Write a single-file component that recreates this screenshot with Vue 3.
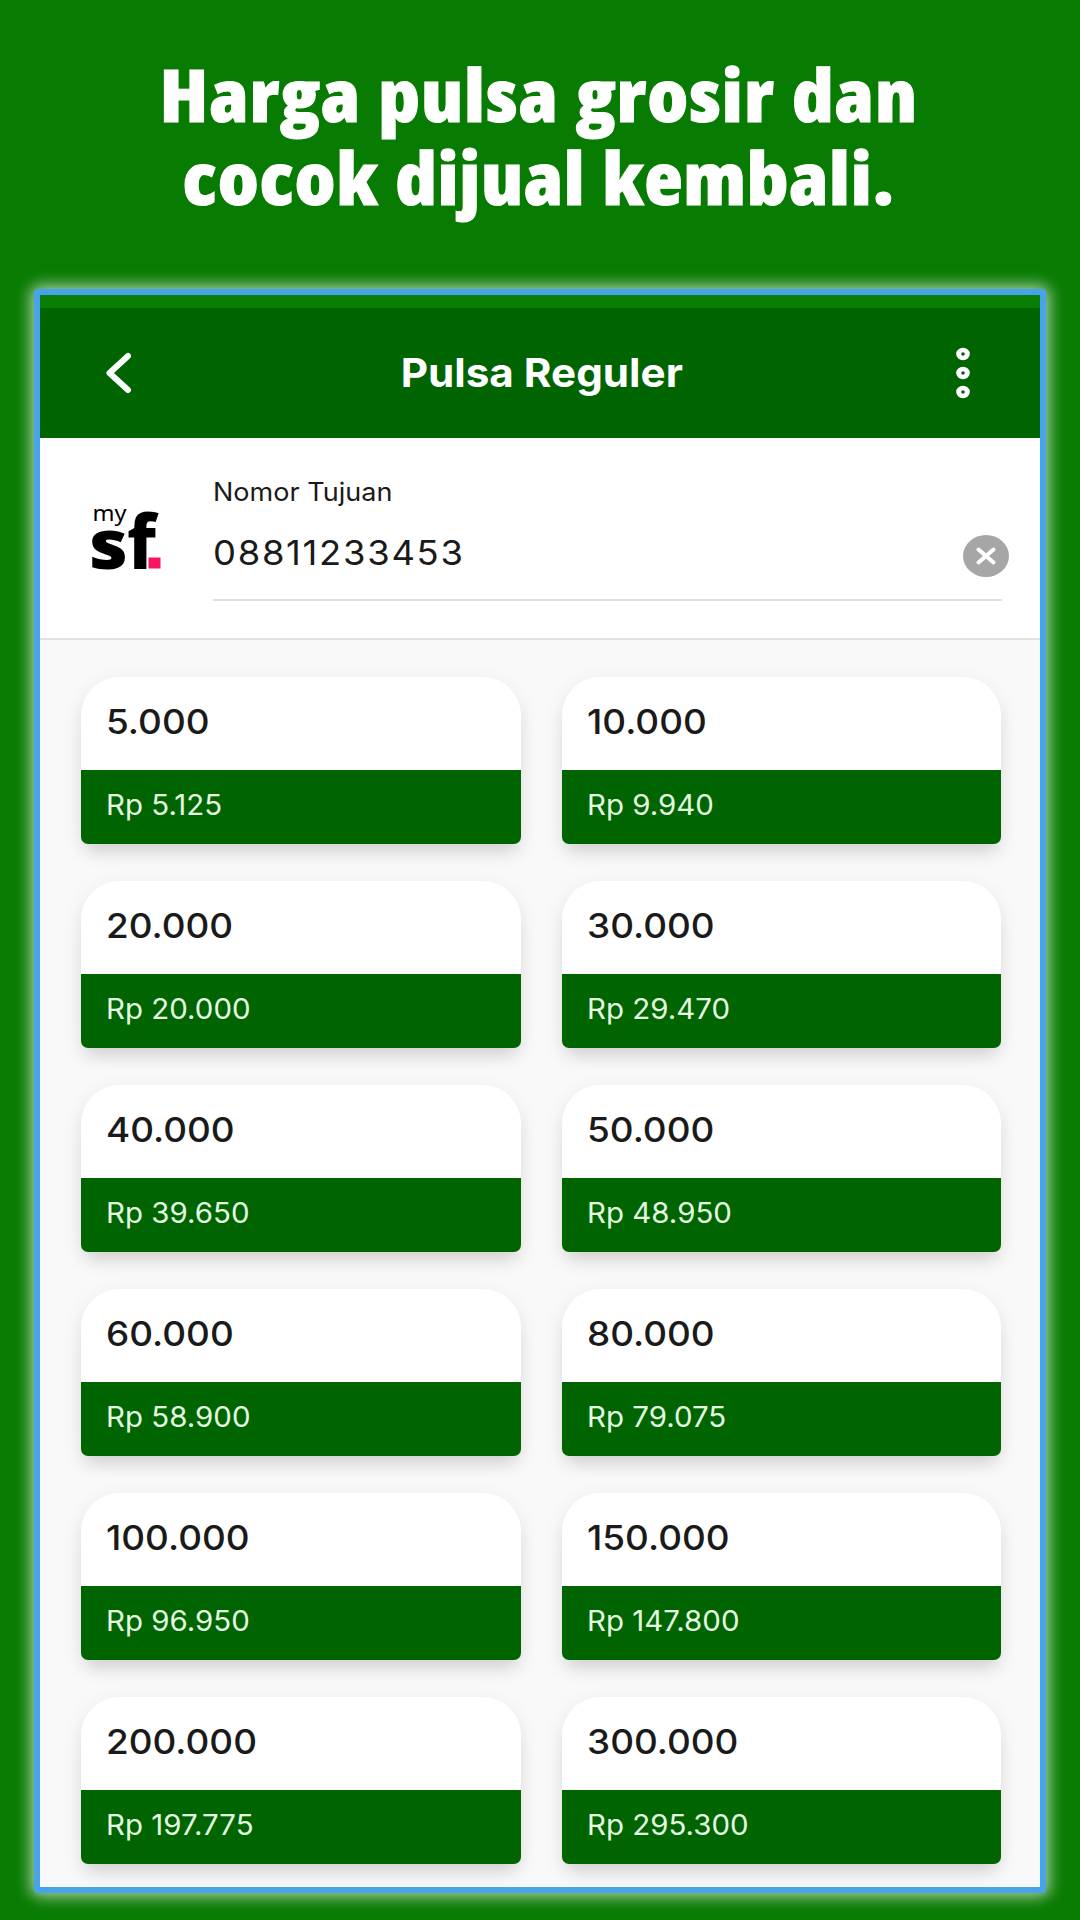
<template>
  <div class="promo">
    <h1 class="headline">
      <span>Harga pulsa grosir dan</span>
      <span class="second-line">cocok dijual kembali.</span>
    </h1>

    <div class="screen">
      <div class="status-strip" />

      <!-- Bilah atas -->
      <header class="app-bar">
        <svg class="back-icon" width="30" height="44" viewBox="0 0 30 44">
          <path d="M24 5 L5.5 22 L24 39" />
        </svg>
        <h2 class="app-title">Pulsa Reguler</h2>
        <svg class="menu-icon" width="16" height="54" viewBox="0 0 16 54">
          <g v-for="y in [8, 27, 46]" :key="y">
            <ellipse cx="8" :cy="y" rx="6.8" ry="6.2" fill="#fff" />
            <circle cx="8" :cy="y" r="1.8" fill="#1c501c" />
          </g>
        </svg>
      </header>

      <!-- Nomor tujuan -->
      <section class="destination">
        <svg class="operator-logo" width="80" height="120" viewBox="-4 -20 80 120">
          <text class="logo-my" x="2.5" y="21.5" textLength="34" lengthAdjust="spacingAndGlyphs">my</text>
          <text class="logo-s" x="-1" y="69.5" textLength="39" lengthAdjust="spacingAndGlyphs">s</text>
          <text class="logo-f" x="37" y="69.5" textLength="29" lengthAdjust="spacingAndGlyphs">f</text>
          <rect x="58.5" y="58.5" width="12" height="11" fill="#fb1464" />
        </svg>
        <div class="field">
          <span class="field-label">Nomor Tujuan</span>
          <div class="field-row">
            <span class="field-value">08811233453</span>
            <svg class="clear-icon" width="46" height="42" viewBox="0 0 46 42">
              <ellipse cx="23" cy="21" rx="23" ry="21" fill="#a6a6a6" />
              <path d="M15.5 14.5 L30.5 27.5 M30.5 14.5 L15.5 27.5" />
            </svg>
          </div>
        </div>
      </section>

      <!-- Daftar nominal -->
      <main class="products">
        <article
          v-for="product in products"
          :key="product.amount"
          class="card"
        >
          <div class="amount">
            <span>{{ product.amount }}</span>
          </div>
          <div class="price">
            <span>Rp {{ product.price }}</span>
          </div>
        </article>
      </main>
    </div>
  </div>
</template>

<script setup>
const products = [
  { amount: '5.000', price: '5.125' },
  { amount: '10.000', price: '9.940' },
  { amount: '20.000', price: '20.000' },
  { amount: '30.000', price: '29.470' },
  { amount: '40.000', price: '39.650' },
  { amount: '50.000', price: '48.950' },
  { amount: '60.000', price: '58.900' },
  { amount: '80.000', price: '79.075' },
  { amount: '100.000', price: '96.950' },
  { amount: '150.000', price: '147.800' },
  { amount: '200.000', price: '197.775' },
  { amount: '300.000', price: '295.300' },
]
</script>

<style>
body {
  margin: 0;
  background: #087b02;
}
</style>

<style scoped>
.promo {
  box-sizing: border-box;
  width: 1080px;
  height: 1920px;
  padding: 53px 34px 0;
  overflow: hidden;
  background: #087b02;
  font-family: Inter, 'Liberation Sans', sans-serif;
  color: #1a1a1a;
}

.headline {
  display: flex;
  flex-direction: column;
  align-items: center;
  height: 236px;
  margin: 0;
  padding-right: 3px;
  box-sizing: border-box;
  color: #fff;
  font-family: 'Open Sans', sans-serif;
  font-size: 73px;
  font-weight: 800;
  font-stretch: 75%;
  letter-spacing: 0.9px;
  line-height: 82.5px;
  word-spacing: 2px;
  white-space: nowrap;
  -webkit-text-stroke: 1px #fff;
}

.headline span {
  transform: scaleX(1.09);
}

.headline .second-line {
  letter-spacing: 0.6px;
}

.screen {
  box-sizing: border-box;
  display: flex;
  flex-direction: column;
  width: 1012px;
  height: 1604px;
  border: 6px solid #47a3ec;
  border-radius: 4px;
  background: #f9f9f9;
  box-shadow: 0 0 16px 3px rgba(255, 255, 255, 0.7);
}

.status-strip {
  height: 13px;
  background: #0a7d05;
}

.app-bar {
  display: flex;
  align-items: center;
  justify-content: space-between;
  box-sizing: border-box;
  height: 130px;
  padding: 0 69px 0 64px;
  background: #006400;
}

.back-icon path {
  fill: none;
  stroke: #fff;
  stroke-width: 6;
  stroke-linecap: round;
  stroke-linejoin: round;
}

.app-title {
  margin: 0;
  color: #fff;
  font-size: 40px;
  font-weight: 700;
  line-height: 48px;
  transform: translateX(-3px) scaleX(1.055);
}

.destination {
  display: flex;
  box-sizing: border-box;
  height: 202px;
  padding: 37px 38px 0 52px;
  border-bottom: 2px solid #e2e2e2;
  background: #fff;
}

.operator-logo {
  flex: none;
  margin: 4px 0 0 -6px;
}

.logo-my {
  font: 400 21px 'Noto Sans', sans-serif;
}

.logo-s {
  font: 900 69px 'Noto Sans', sans-serif;
}

.logo-f {
  font: 800 75px 'Noto Sans', sans-serif;
}

.field {
  flex: 1;
  height: 124px;
  margin-left: 47px;
  border-bottom: 2px solid #e0e0e0;
}

.field-label {
  display: block;
  width: max-content;
  font-size: 25.5px;
  line-height: 34px;
  transform: scaleX(1.06);
  transform-origin: left;
}

.field-row {
  display: flex;
  align-items: center;
  justify-content: space-between;
  margin: 26px -7px 0 0;
}

.field-value {
  font-size: 34px;
  letter-spacing: 1.6px;
  line-height: 40px;
  transform: translateY(-3px) scaleX(1.07);
  transform-origin: left;
}

.clear-icon path {
  fill: none;
  stroke: #fff;
  stroke-width: 4;
  stroke-linecap: round;
}

.products {
  display: grid;
  grid-template-columns: 440px 439px;
  gap: 37px 41px;
  padding: 37px 39px 0 41px;
}

.card {
  height: 167px;
  border-radius: 38px 38px 7px 7px;
  overflow: hidden;
  background: #fff;
  box-shadow: 0 6px 22px rgba(0, 0, 0, 0.08), 0 12px 18px -6px rgba(0, 0, 0, 0.12);
}

.amount {
  height: 93px;
  padding-left: 25px;
  font-size: 34px;
  font-weight: 500;
  line-height: 90px;
}

.price {
  height: 74px;
  padding-left: 25px;
  background: #006400;
  color: #e4fbe2;
  font-size: 28px;
  line-height: 70px;
}

.amount span,
.price span {
  display: inline-block;
  transform: scaleX(1.085);
  transform-origin: left;
}

.price span {
  transform: scaleX(1.052);
}
</style>
